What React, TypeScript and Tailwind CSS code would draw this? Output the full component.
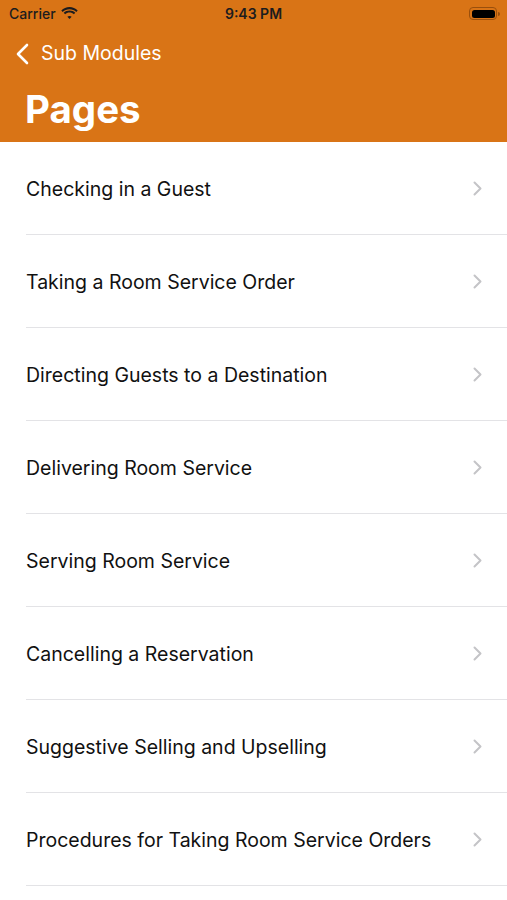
import React from 'react';

const paginas = [
  'Checking in a Guest',
  'Taking a Room Service Order',
  'Directing Guests to a Destination',
  'Delivering Room Service',
  'Serving Room Service',
  'Cancelling a Reservation',
  'Suggestive Selling and Upselling',
  'Procedures for Taking Room Service Orders',
];

const Wifi = () => (
  <svg width="17" height="13" viewBox="0 0 17 13" fill="#1c1c1e">
    <path d="M8.5 2.2c2.6 0 5 1 6.8 2.7l1.4-1.5C14.5 1.3 11.6 0 8.5 0S2.5 1.3.3 3.4l1.4 1.5C3.5 3.2 5.9 2.2 8.5 2.2z" />
    <path d="M8.5 5.6c1.7 0 3.2.6 4.4 1.7l1.4-1.5C12.8 4.4 10.7 3.5 8.5 3.5S4.2 4.4 2.7 5.8l1.4 1.5c1.2-1.1 2.7-1.7 4.4-1.7z" />
    <path d="M8.5 8.9c.8 0 1.5.3 2.1.8L8.5 12 6.4 9.7c.6-.5 1.3-.8 2.1-.8z" />
  </svg>
);

const App: React.FC = () => {
  return (
    <div className="w-[507px] h-[900px] overflow-hidden bg-white" style={{ fontFamily: 'Inter, "Noto Sans", sans-serif' }}>
      {/* cabecera naranja */}
      <div className="bg-[#d97416] h-[142px] flex flex-col">
        <div className="h-[27px] flex items-center justify-between pl-[9px] pr-[7px] relative">
          <div className="flex items-center gap-[5px] text-[14px] font-medium text-[#1c1c1e]">
            <span>Carrier</span>
            <Wifi />
          </div>
          <span className="absolute left-0 right-0 text-center text-[14px] font-semibold text-[#1c1c1e]">9:43 PM</span>
          <div className="flex items-center">
            <div className="w-[28px] h-[13px] rounded-[4px] border border-[#9a4f0c] p-[1.5px]">
              <div className="w-full h-full rounded-[2.5px] bg-black" />
            </div>
            <div className="w-[2px] h-[4px] bg-[#9a4f0c] rounded-r-sm ml-[1px]" />
          </div>
        </div>
        <div className="h-[52px] flex items-center pl-[16px] pt-[2px] text-white">
          <svg width="13" height="22" viewBox="0 0 13 22" fill="none" stroke="white" strokeWidth="2.6" strokeLinecap="round" strokeLinejoin="round">
            <path d="M11 2 2 11l9 9" />
          </svg>
          <span className="ml-[12px] text-[19.5px] leading-none">Sub Modules</span>
        </div>
        <div className="flex-1 flex items-center pl-[25px] pb-[2px]">
          <h1 className="text-[38.5px] font-bold text-white leading-none">Pages</h1>
        </div>
      </div>

      {/* lista de páginas */}
      <ul>
        {paginas.map((titulo) => (
          <li key={titulo} className="pl-[26px]">
            <div className="h-[93px] flex items-center justify-between pr-[25px] border-b border-[#e3e3e6]">
              <span className="text-[19.5px] text-[#111] leading-none pt-[3px]">{titulo}</span>
              <svg width="9" height="15" viewBox="0 0 9 15" fill="none" stroke="#c4c4c7" strokeWidth="2" strokeLinecap="round" strokeLinejoin="round">
                <path d="M1.5 1.5 7.5 7.5 1.5 13.5" />
              </svg>
            </div>
          </li>
        ))}
      </ul>
    </div>
  );
};

export default App;
